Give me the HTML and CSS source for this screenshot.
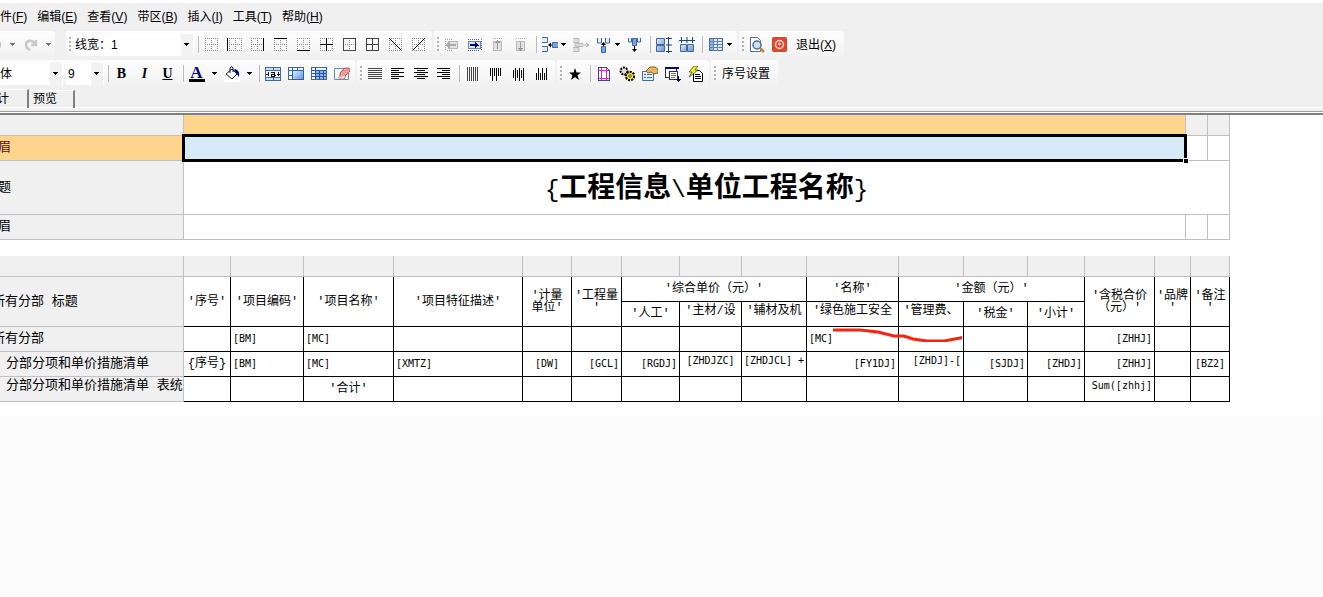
FILE: index.html
```html
<!DOCTYPE html>
<html lang="zh-CN">
<head>
<meta charset="utf-8">
<title>报表设计</title>
<link rel="stylesheet" href="styles.css">
</head>
<body>
<svg class="defs" width="0" height="0" aria-hidden="true">
  <defs>
    <linearGradient id="blue" x1="0" y1="0" x2="1" y2="1"><stop offset="0" stop-color="#e2eefc"/><stop offset="1" stop-color="#5f92dd"/></linearGradient>
    <symbol id="dots" viewBox="0 0 16 16"><path d="M1 1.5h14M1 7.5h14M1 13.5h14M1.5 1v13M7.5 1v13M13.5 1v13" fill="none" stroke="#8a8a8a" stroke-dasharray="1 1"/></symbol>
    <symbol id="caret" viewBox="0 0 5 3"><path d="M0 0h5v1H4v1H3v1H2V2H1V1H0z"/></symbol>
  </defs>
</svg>

<header class="chrome">
  <nav class="menu">
    <button>文件(<u>F</u>)</button><button>编辑(<u>E</u>)</button><button>查看(<u>V</u>)</button><button>带区(<u>B</u>)</button><button>插入(<u>I</u>)</button><button>工具(<u>T</u>)</button><button>帮助(<u>H</u>)</button>
  </nav>

  <div class="toolrow">
    <div class="bar bar-history">
      <button class="tool clipped" aria-label="撤销"><svg class="icon" viewBox="0 0 16 16"><path d="M4 3v5h5M5 7c3-4 8-3 8 1 0 3-2 4-4 5" fill="none" stroke="#c4c4c4" stroke-width="2.5"/></svg></button>
      <button class="drop wide off" aria-label="撤销列表"><svg class="caret"><use href="#caret"/></svg></button>
      <button class="tool" aria-label="重做"><svg class="icon" viewBox="0 0 16 16"><path d="M13 3v5H8M12 7C9 2 3 3 3 8c0 3 2 4 4 5" fill="none" stroke="#c8c8c8" stroke-width="2.5"/></svg></button>
      <button class="drop wide off" aria-label="重做列表"><svg class="caret"><use href="#caret"/></svg></button>
    </div>
    <div class="bar">
      <i class="grip wide-grip"></i>
      <div class="combo line-width"><label for="lw">线宽：</label><select id="lw"><option>1</option></select><svg class="caret"><use href="#caret"/></svg></div>
      <i class="sep"></i>
      <button class="tool" aria-label="无边框"><svg class="icon crisp" viewBox="0 0 16 16"><use href="#dots"/></svg></button>
      <button class="tool" aria-label="左边框"><svg class="icon crisp" viewBox="0 0 16 16"><use href="#dots" x="1"/><path d="M0 1h1v13H0z"/></svg></button>
      <button class="tool" aria-label="右边框"><svg class="icon crisp" viewBox="0 0 16 16"><use href="#dots"/><path d="M13 1h1v13h-1z"/></svg></button>
      <button class="tool" aria-label="上边框"><svg class="icon crisp" viewBox="0 0 16 16"><use href="#dots"/><path d="M1 1h13v1H1z"/></svg></button>
      <button class="tool" aria-label="下边框"><svg class="icon crisp" viewBox="0 0 16 16"><use href="#dots"/><path d="M1 13h13v1H1z"/></svg></button>
      <button class="tool" aria-label="内部边框"><svg class="icon crisp" viewBox="0 0 16 16"><use href="#dots"/><path d="M1 7h13v1H1zM7 1h1v13H7z"/></svg></button>
      <button class="tool" aria-label="外边框"><svg class="icon crisp" viewBox="0 0 16 16"><use href="#dots"/><path d="M1.5 1.5h12v12h-12z" fill="none" stroke="#444"/></svg></button>
      <button class="tool" aria-label="全部边框"><svg class="icon crisp" viewBox="0 0 16 16"><path d="M1.5 1.5h12v12h-12zM7.5 1v13M1 7.5h13" fill="none" stroke="#444"/></svg></button>
      <button class="tool" aria-label="左斜线"><svg class="icon crisp" viewBox="0 0 16 16"><use href="#dots"/><path d="M1.5 1.5l12 12" stroke="#000"/></svg></button>
      <button class="tool" aria-label="右斜线"><svg class="icon crisp" viewBox="0 0 16 16"><use href="#dots"/><path d="M13.5 1.5l-12 12" stroke="#000"/></svg></button>
    </div>
    <div class="bar">
      <i class="grip"></i>
      <button class="tool" aria-label="左移列"><svg class="icon crisp" viewBox="0 0 16 16"><path d="M1.5 2v12M3 2.5h5M3 13.5h5" stroke="#aaa" stroke-dasharray="1 1"/><path d="M4.5 4.5h9v7h-9z" fill="#e2e2e2" stroke="#bbb"/><path d="M2 7h1V6h1V5h1V4h1v3h6v2H6v3H5v-1H4v-1H3V9H2z" fill="#aaa"/></svg></button>
      <button class="tool" aria-label="右移列"><svg class="icon crisp" viewBox="0 0 16 16"><path d="M1 2.5h11M1 13.5h11M14.5 2v12" stroke="#557" stroke-dasharray="1 1"/><path d="M1.5 4.5h12v7h-12z" fill="#dbe8fa" stroke="#7088a8"/><path d="M3 7h5V5h1v1h1v1h1v1h1v1h-2v1H9v1H8V9H3z" fill="#000080"/></svg></button>
      <button class="tool" aria-label="上移行"><svg class="icon crisp" viewBox="0 0 16 16"><path d="M3 1.5h10" stroke="#aaa" stroke-dasharray="1 1"/><path d="M3.5 4.5h8v9h-8z" fill="#e2e2e2" stroke="#bbb"/><path d="M7 12V6H5l2.500-3L10 6H8v6z" fill="#999"/></svg></button>
      <button class="tool" aria-label="下移行"><svg class="icon crisp" viewBox="0 0 16 16"><path d="M3 1.5h10" stroke="#aaa" stroke-dasharray="1 1"/><path d="M3.5 4.5h8v9h-8z" fill="#e2e2e2" stroke="#bbb"/><path d="M7 5v6H5l2.500 3L10 11H8V5z" fill="#999"/></svg></button>
      <i class="sep"></i>
      <button class="tool" aria-label="插入列"><svg class="icon" viewBox="0 0 16 16"><path d="M0 .5h5.500v5H0M0 9.500h5.500v5H0" fill="#e3edf9" stroke="#416894"/><path d="M6 8l3-2.500v5z"/><path d="M8 8h3" stroke="#000"/><path d="M10.500 5.500h6v5h-6z" fill="#75a5e8" stroke="#3d679f"/></svg></button>
      <button class="drop" aria-label="插入列选项"><svg class="caret"><use href="#caret"/></svg></button>
      <button class="tool" aria-label="删除列"><svg class="icon" viewBox="0 0 16 16"><path d="M0 1.500h6v4H0M0 10.500h6v4H0M2 6.500h8v3H2z" fill="#ddd" stroke="#bbb"/><path d="M11 8h5M13 6l3 2-3 2" fill="none" stroke="#aaa"/></svg></button>
      <button class="tool" aria-label="插入行"><svg class="icon" viewBox="0 0 16 16"><path d="M1.500 1v5h4V1M9.500 1v5h4V1" fill="#e3edf9" stroke="#416894"/><path d="M7.500 5l2.500 3H5zM7 7h1v3H7z"/><path d="M5.500 9.500h4v6h-4z" fill="#75a5e8" stroke="#3d679f"/></svg></button>
      <button class="drop" aria-label="插入行选项"><svg class="caret"><use href="#caret"/></svg></button>
      <button class="tool" aria-label="删除行"><svg class="icon" viewBox="0 0 16 16"><path d="M1.500 1v4h3V1M10.500 1v4h3V1" fill="#e3edf9" stroke="#416894"/><path d="M5.500 1.500h4v7h-4z" fill="#75a5e8" stroke="#3d679f"/><path d="M7 9h1v4H7zM5 12h5l-2.500 3z"/></svg></button>
      <i class="sep"></i>
      <button class="tool" aria-label="等行高"><svg class="icon" viewBox="0 0 16 16"><path d="M.5 1.500h8v6h-8zM.5 8.500h8v6h-8z" fill="url(#blue)" stroke="#47688f"/><path d="M12.500 0v16M10 1.500h6M10 8h6M10 14.500h6" stroke="#1d4580" fill="none"/></svg></button>
      <button class="tool" aria-label="等列宽"><svg class="icon" viewBox="0 0 16 16"><path d="M1.500 7.500h6v7h-6zM8.500 7.500h6v7h-6z" fill="url(#blue)" stroke="#47688f"/><path d="M0 3.500h16M2.500 0v6M8 0v6M13.500 0v6" stroke="#1d4580" fill="none"/></svg></button>
      <i class="sep"></i>
      <button class="tool" aria-label="表格"><svg class="icon crisp" viewBox="0 0 16 16"><path d="M1.500 1.500h13v12h-13z" fill="#dceafc" stroke="#47688f"/><path d="M2 2h4v11H2z" fill="#8eb5ec"/><path d="M5.500 1v13M9.500 1v13M1 4.500h13M1 7.500h13M1 10.500h13" stroke="#6484b0"/></svg></button>
      <button class="drop" aria-label="表格选项"><svg class="caret"><use href="#caret"/></svg></button>
    </div>
    <div class="bar">
      <i class="grip"></i>
      <button class="tool" aria-label="打印预览"><svg class="icon" viewBox="0 0 16 16"><path d="M1.500.5h7l3 3v11h-10z" fill="#fff" stroke="#536c91"/><circle cx="8" cy="8" r="4" fill="#c5e2f4" stroke="#536c91" stroke-width="1.500"/><path d="M11 11l4 4" stroke="#b98943" stroke-width="2.500"/></svg></button>
      <button class="tool" aria-label="关闭"><svg class="icon" viewBox="0 0 16 16"><rect x=".5" y=".5" width="14" height="14" rx="1" fill="#e4452b" stroke="#c84a35"/><circle cx="7.500" cy="7.500" r="4" fill="none" stroke="#ffd9d0" stroke-width="1.500"/><circle cx="7.500" cy="7" r="1" fill="none" stroke="#fff"/></svg></button>
      <button class="text-tool">退出(<u>X</u>)</button>
    </div>
  </div>

  <div class="toolrow">
    <div class="bar">
      <div class="combo font-name"><select aria-label="字体"><option>宋体</option></select><svg class="caret"><use href="#caret"/></svg></div>
      <div class="combo font-size"><select aria-label="字号"><option>9</option></select><svg class="caret"><use href="#caret"/></svg></div>
      <i class="sep"></i>
      <button class="tool glyph">B</button>
      <button class="tool glyph italic">I</button>
      <button class="tool glyph under">U</button>
      <i class="sep"></i>
      <button class="tool glyph color"><span>A</span></button>
      <button class="drop wide" aria-label="字体颜色"><svg class="caret"><use href="#caret"/></svg></button>
      <button class="tool" aria-label="填充颜色"><svg class="icon" viewBox="0 0 16 16"><path d="M2 8l6-5 5 5-5 5z" fill="#fff" stroke="#222"/><path d="M6 7V2q2-3 3 0v4" fill="none" stroke="#000080"/><path d="M11 3q5 1 4 8l-2-3-3-4z" fill="#000080"/><path d="M0 13h16v3H0z" fill="#fff"/></svg></button>
      <button class="drop wide" aria-label="填充颜色列表"><svg class="caret"><use href="#caret"/></svg></button>
      <i class="sep"></i>
      <button class="tool" aria-label="合并居中"><svg class="icon crisp" viewBox="0 0 16 16"><path d="M.5 1.500h15v13H.5z" fill="#c9def8" stroke="#47688f"/><path d="M1 4.500h14M1 11.500h14M8.500 1v3M8.500 12v3" stroke="#47688f"/><path d="M1 5h14v6H1z" fill="#eef5ff"/><path d="M1 8h3M12 8h3M3 6v4M13 6v4M6 6h3v4H6V8h3M9 9h2" fill="none" stroke="#111"/></svg></button>
      <button class="tool" aria-label="合并"><svg class="icon crisp" viewBox="0 0 16 16"><path d="M.5 1.500h15v12H.5z" fill="#eef5ff" stroke="#47688f"/><path d="M4.500 2v3M9.500 2v3M1 4.500h3M1 9.500h3" stroke="#47688f"/><path d="M4.500 4.500h11v9h-11z" fill="url(#blue)" stroke="#2860b0"/></svg></button>
      <button class="tool" aria-label="拆分"><svg class="icon crisp" viewBox="0 0 16 16"><path d="M.5 1.500h15v12H.5z" fill="#eef5ff" stroke="#47688f"/><path d="M4 4h11v9H4z" fill="#8ab4ee"/><path d="M4.500 2v12M8.500 4v10M12.500 4v10M1 4.500h14M1 7.500h14M1 10.500h14" stroke="#2a56a0"/></svg></button>
      <button class="tool" aria-label="清除"><svg class="icon" viewBox="0 0 16 16"><path d="M.5 2.500h14v11H.5z" fill="#f8fbff" stroke="#6c8db8"/><path d="M6 7l5-5h4l1 3-6 6H6z" fill="#f09a96" stroke="#cc4f50"/><path d="M4 11l3 2h3l2-3" fill="#fff" stroke="#cc6b68"/></svg></button>
    </div>
    <div class="bar">
      <i class="grip"></i>
      <button class="tool" aria-label="两端对齐"><svg class="icon crisp" viewBox="0 0 16 16"><path d="M1 2.500h14M1 4.500h14M1 6.500h14M1 8.500h14M1 10.500h14M1 12.500h14" stroke="#444"/></svg></button>
      <button class="tool" aria-label="左对齐"><svg class="icon crisp" viewBox="0 0 16 16"><path d="M1 2.500h13M1 4.500h8M1 6.500h13M1 8.500h8M1 10.500h13M1 12.500h8" stroke="#000"/></svg></button>
      <button class="tool" aria-label="居中"><svg class="icon crisp" viewBox="0 0 16 16"><path d="M1 2.500h14M4 4.500h8M1 6.500h14M4 8.500h8M1 10.500h14M4 12.500h8" stroke="#000"/></svg></button>
      <button class="tool" aria-label="右对齐"><svg class="icon crisp" viewBox="0 0 16 16"><path d="M1 2.500h13M6 4.500h8M1 6.500h13M6 8.500h8M1 10.500h13M6 12.500h8" stroke="#000"/></svg></button>
      <i class="sep"></i>
      <button class="tool" aria-label="垂直两端"><svg class="icon crisp" viewBox="0 0 16 16"><path d="M2.500 1v14M4.500 1v14M6.500 1v14M8.500 1v14M10.500 1v14M12.500 1v14" stroke="#444"/></svg></button>
      <button class="tool" aria-label="顶端对齐"><svg class="icon crisp" viewBox="0 0 16 16"><path d="M2.500 2v8M4.500 2v13M6.500 2v8M8.500 2v13M10.500 2v8M12.500 2v8" stroke="#000"/></svg></button>
      <button class="tool" aria-label="垂直居中"><svg class="icon crisp" viewBox="0 0 16 16"><path d="M2.500 4v8M4.500 2v13M6.500 4v8M8.500 2v13M10.500 4v8M12.500 2v13" stroke="#000"/></svg></button>
      <button class="tool" aria-label="底端对齐"><svg class="icon crisp" viewBox="0 0 16 16"><path d="M2.500 7v7M4.500 2v12M6.500 7v7M8.500 2v12M10.500 7v7M12.500 2v12" stroke="#000"/></svg></button>
    </div>
    <div class="bar">
      <i class="grip"></i>
      <button class="tool" aria-label="收藏"><svg class="icon" viewBox="0 0 16 16"><path d="M8 2l1.500 4.500H14l-3.500 2.800L12 14l-4-3-4 3 1.500-4.700L2 6.500h4.500z"/></svg></button>
      <i class="sep"></i>
      <button class="tool" aria-label="页面设置"><svg class="icon crisp" viewBox="0 0 16 16"><path d="M2.500 1.500h8l3 3v10h-11z" fill="#fff" stroke="#384f83"/><path d="M5.500 2v12M10.500 2v12M3 4.500h10M3 12.500h10" stroke="#d22bc8"/></svg></button>
      <button class="tool" aria-label="选项"><svg class="icon" viewBox="0 0 16 16"><circle cx="5" cy="5" r="3.500" fill="#ddd" stroke="#000" stroke-width="2" stroke-dasharray="2 1"/><circle cx="11" cy="10" r="4" fill="#ffeb00" stroke="#000" stroke-width="2.500" stroke-dasharray="2 1"/><circle cx="11" cy="10" r="3" fill="#ffeb00"/><circle cx="11" cy="10" r="1.300" fill="#fff" stroke="#000" stroke-width=".7"/></svg></button>
      <button class="tool" aria-label="属性"><svg class="icon" viewBox="0 0 16 16"><path d="M.5 5.500h11v9H.5z" fill="#e6f1ff" stroke="#416aa3"/><path d="M2 8.500h2M5 8.500h5M2 11.500h2M5 11.500h5" stroke="#416aa3"/><path d="M4 5l4-4h5l3 2v4l-4 1-3-2-3 1z" fill="#e9b55e" stroke="#87602a"/></svg></button>
      <button class="tool" aria-label="数据列表"><svg class="icon crisp" viewBox="0 0 16 16"><path d="M.5 1.500h11v10H.5z" fill="#fff" stroke="#333"/><path d="M0 1h14v2H0z" fill="#000080"/><path d="M4.500 5.500h8v8h-8z" fill="#fff" stroke="#333"/><path d="M6 7.500h5M6 9.500h5M6 11.500h4" stroke="#777"/><path d="M13 10h1v3h2l-2.500 3-2.500-3h2z" fill="#000080"/></svg></button>
      <button class="tool" aria-label="脚本"><svg class="icon" viewBox="0 0 16 16"><path d="M5.500 4.500h6l3 3v8h-9z" fill="#fff" stroke="#000"/><path d="M7 8.500h5M7 10.500h6M7 12.500h6" stroke="#000"/><path d="M6 0h4L7 4h3L1 11l3-5H1z" fill="#ffed00" stroke="#333" stroke-width=".7"/></svg></button>
    </div>
    <div class="bar">
      <i class="grip"></i>
      <button class="text-tool">序号设置</button>
    </div>
  </div>

  <div class="tabs">
    <button class="tab active"><span>设计</span></button><button class="tab">预览</button>
  </div>
</header>

<main class="canvas">
  <table class="sheet page-head">
    <colgroup><col class="c-label"><col class="c-body"><col class="c-edge"><col class="c-edge"></colgroup>
    <tr class="ruler"><th></th><td class="picked"></td><td></td><td></td></tr>
    <tr><th class="picked cut">眉</th><td class="selected"><div class="selection"><i></i></div></td><td></td><td></td></tr>
    <tr class="title-row"><th class="cut">题</th><td colspan="3" class="title"><span>{</span>工程信息<span>\</span>单位工程名称<span>}</span></td></tr>
    <tr><th class="cut">眉</th><td></td><td></td><td></td></tr>
  </table>

  <table class="sheet detail">
    <colgroup><col class="c-label"><col class="w47"><col class="w73"><col class="w90"><col class="w129"><col class="w49"><col class="w50"><col class="w58"><col class="w62"><col class="w65"><col class="w92"><col class="w65"><col class="w64"><col class="w57"><col class="w70"><col class="w36"><col class="w39"></colgroup>
    <tr class="ruler"><th></th><td></td><td></td><td></td><td></td><td></td><td></td><td></td><td></td><td></td><td></td><td></td><td></td><td></td><td></td><td></td><td></td></tr>
    <tr>
      <th rowspan="2" class="half">所有分部 标题</th>
      <td rowspan="2">'序号'</td><td rowspan="2">'项目编码'</td><td rowspan="2">'项目名称'</td><td rowspan="2">'项目特征描述'</td>
      <td rowspan="2">'计量<br>单位'</td><td rowspan="2">'工程量<br>'</td>
      <td colspan="3">'综合单价（元）'</td><td>'名称'</td><td colspan="3">'金额（元）'</td>
      <td rowspan="2">'含税合价<br>（元）'</td><td rowspan="2">'品牌<br>'</td><td rowspan="2">'备注<br>'</td>
    </tr>
    <tr><td>'人工'</td><td class="top">'主材/设</td><td class="top">'辅材及机</td><td class="top">'绿色施工安全</td><td class="top">'管理费、</td><td>'税金'</td><td>'小计'</td></tr>
    <tr class="code"><th class="half">所有分部</th><td></td><td class="l">[BM]</td><td class="l">[MC]</td><td></td><td></td><td></td><td></td><td></td><td></td><td class="l">[MC]</td><td></td><td></td><td></td><td class="r">[ZHHJ]</td><td></td><td></td></tr>
    <tr class="code"><th class="inner">分部分项和单价措施清单</th><td class="han">{序号}</td><td class="l">[BM]</td><td class="l">[MC]</td><td class="l">[XMTZ]</td><td>[DW]</td><td class="r">[GCL]</td><td class="r">[RGDJ]</td><td class="top">[ZHDJZC]</td><td class="top">[ZHDJCL] +</td><td class="r">[FY1DJ]</td><td class="top r">[ZHDJ]-[</td><td class="r">[SJDJ]</td><td class="r">[ZHDJ]</td><td class="r">[ZHHJ]</td><td></td><td>[BZ2]</td></tr>
    <tr class="code"><th class="inner top">分部分项和单价措施清单 表统</th><td></td><td></td><td class="han">'合计'</td><td></td><td></td><td></td><td></td><td></td><td></td><td></td><td></td><td></td><td></td><td class="top r">Sum([zhhj]</td><td></td><td></td></tr>
  </table>
  <svg class="mark" viewBox="0 0 130 14" aria-hidden="true"><path d="M1 2h27l18 2 16 4h10l9 3 14 2h17l16-3 17-3" fill="none" stroke="#fb2413" stroke-width="3"/></svg>
</main>
</body>
</html>
```
FILE: styles.css
```css
* { box-sizing: border-box; }
body {
  margin: 0;
  padding-top: 3px;
  background: #fcfcfc;
  color: #000;
  font: 12px/16px "Liberation Sans", "Noto Sans CJK SC", sans-serif;
  overflow-x: hidden;
  box-shadow: inset 0 3px #fff;
}
.defs { position: absolute; }
button { margin: 0; padding: 0; border: 0; background: none; color: inherit; font: inherit; white-space: nowrap; flex: none; }
.icon { display: block; width: 16px; height: 16px; }
.crisp { shape-rendering: crispEdges; }
.caret { display: block; flex: none; width: 5px; height: 3px; shape-rendering: crispEdges; }

.chrome { background: #f0f0f0; }
.menu { display: flex; gap: 10px; height: 28px; align-items: center; margin-left: -12px; }
.toolrow { display: flex; gap: 2px; padding-bottom: 2px; }
.bar {
  display: flex;
  align-items: center;
  flex: none;
  height: 27px;
  padding-right: 2px;
  border-radius: 0 3px 3px 0;
  background: linear-gradient(#fdfdfd, #f8f8f8 50%, #f0f0f0);
}
.bar-history { padding-right: 0; margin-right: 9px; }
.tool { display: flex; align-items: center; justify-content: center; width: 23px; height: 22px; }
.clipped { margin-left: -17px; }
.drop { display: flex; align-items: center; width: 8px; height: 22px; }
.drop.wide { width: 12px; justify-content: center; }
.bar-history .drop.wide { width: 13px; }
.off { fill: #777; }
.grip { flex: none; width: 6px; height: 16px; background: repeating-linear-gradient(#b4b4b4 0 2px, transparent 2px 4px) 3px 0 / 2px 100% no-repeat; }
.wide-grip { width: 8px; }
.sep { flex: none; width: 6px; height: 17px; background: linear-gradient(#bbb, #bbb) 4px 0 / 1px 100% no-repeat; }
.text-tool { padding: 0 6px 0 5px; height: 22px; }

.combo { display: flex; align-items: center; height: 22px; padding-right: 4px; border-right: 1px solid #fff; background: linear-gradient(#f2f2f2, #f2f2f2) right / 12px 100% no-repeat #fff; }
.combo select { appearance: none; flex: 1; min-width: 0; height: 22px; padding: 0; border: 0; background: transparent; color: #000; font: inherit; }
.line-width { width: 120px; padding-left: 1px; }
.font-name { width: 63px; margin-right: 3px; }
.font-name select { text-indent: -12px; }
.font-size { width: 38px; padding-left: 2px; }

.glyph { font: bold 14px/16px "Liberation Serif", serif; }
.italic { font-style: italic; }
.under { text-decoration: underline; }
.color span { width: 16px; height: 16px; border-bottom: 3px solid #000; color: #000080; font-size: 17px; line-height: 13px; }

.tabs { display: flex; align-items: flex-end; height: 26px; padding-bottom: 2px; border-bottom: 2px solid #808080; background: linear-gradient(#f0f0f0 0 18px, #fff 18px 19px, #f0f0f0 19px 22px, #a0a0a0 22px 23px, #fff 23px); }
.tab { height: 18px; margin-bottom: 3px; padding: 0 16px 0 4px; border-top: 1px solid #fff; border-right: 2px solid #808080; line-height: 17px; }
.tab.active { width: 29px; height: 19px; padding: 0; overflow: hidden; text-align: left; line-height: 16px; }
.tab.active span { margin-left: -15px; }

.canvas { position: relative; padding-bottom: 14px; background: #fff; }
.sheet { table-layout: fixed; width: 1230px; border-spacing: 0; }
.sheet th, .sheet td { height: 25px; padding: 0; border: solid #c0c0c0; border-width: 0 1px 1px 0; line-height: 12px; white-space: nowrap; }
.sheet th { background: #f0f0f0; font-family: "Liberation Mono", "Noto Sans CJK SC", monospace; font-weight: 400; font-size: 13px; text-align: left; overflow: hidden; }
.sheet .ruler th, .sheet .ruler td { height: 21px; background: #f0f0f0; }
.sheet .picked, .sheet .ruler .picked { background: #ffd48d; }
.sheet th.picked { color: #600060; }
.cut { text-indent: -2px; }
.half { text-indent: -8px; }
.inner { text-indent: 6px; }
.c-label { width: 184px; }
.c-body { width: 1002px; }
.c-edge { width: 22px; }
.sheet .title-row th { height: 54px; }
.sheet .title { text-align: center; font: bold 28px/28px "Noto Sans CJK SC", sans-serif; }
.title span { font-family: "Liberation Mono", monospace; font-size: 24px; font-weight: 400; }
.sheet .selected { position: relative; background: #d8eaf8; }
.selection { position: absolute; inset: -2px; border: 3px solid #000; z-index: 1; }
.selection i { position: absolute; right: -5px; bottom: -5px; width: 6px; height: 6px; border: 1px solid #fff; background: #000; }

.detail { margin-top: 16px; }
.sheet.detail td { border-color: #000; text-align: center; font-family: "Liberation Mono", "Noto Sans CJK SC", monospace; }
.sheet.detail .ruler td { border-color: #c0c0c0; }
.sheet.detail .code td { font-family: "DejaVu Sans Mono", monospace; font-size: 10px; }
.sheet.detail .code .han { font: 12px/12px "Liberation Mono", "Noto Sans CJK SC", monospace; }
.sheet.detail .l { text-align: left; padding-left: 2px; }
.sheet.detail .r { text-align: right; padding-right: 2px; }
.sheet .top { vertical-align: top; padding-top: 3px; }
.w47 { width: 47px; } .w73 { width: 73px; } .w90 { width: 90px; } .w129 { width: 129px; }
.w49 { width: 49px; } .w50 { width: 50px; } .w58 { width: 58px; } .w62 { width: 62px; }
.w65 { width: 65px; } .w92 { width: 92px; } .w64 { width: 64px; } .w57 { width: 57px; }
.w70 { width: 70px; } .w36 { width: 36px; } .w39 { width: 39px; }
.mark { position: absolute; left: 832px; top: 213px; width: 130px; height: 14px; }
```
